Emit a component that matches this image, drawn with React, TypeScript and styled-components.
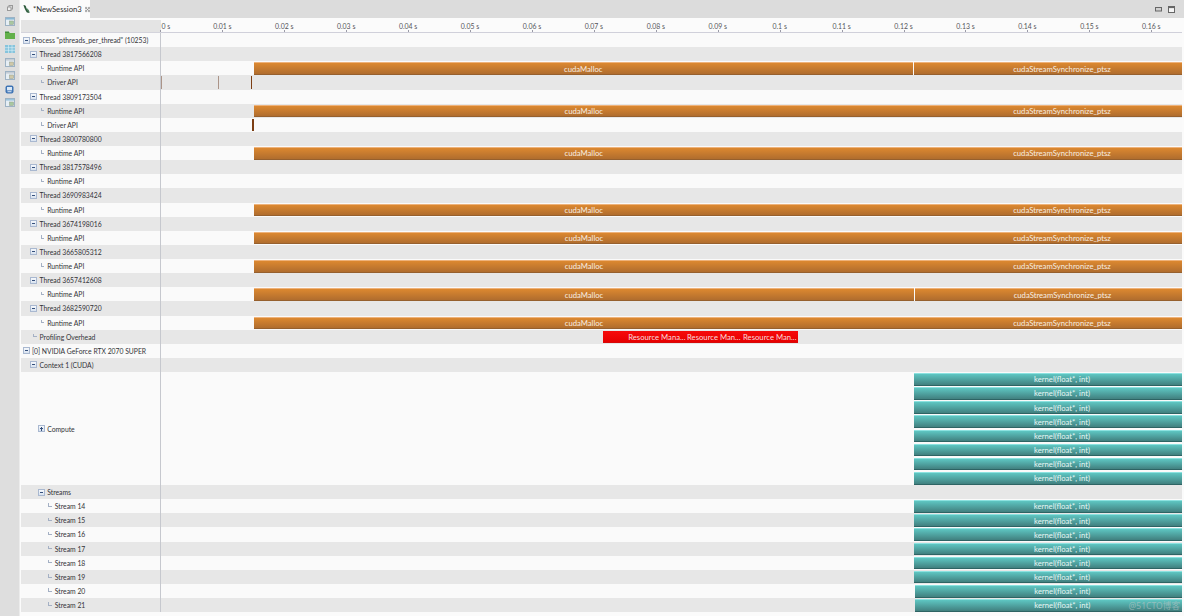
import React from 'react'
import styled, { createGlobalStyle } from 'styled-components'

const ROW_H = 14.125
const TRACK_X = 161
const TICK_0 = 160.4
const PX_PER_TICK = 61.93

const GlobalStyle = createGlobalStyle`
  html, body { margin: 0; padding: 0; background: #fbfbfb; overflow: hidden; }
  body { font-family: Lato, 'Noto Sans', sans-serif; font-size: 6.8px; color: #3c3c3c; }
`

const Page = styled.div`
  display: flex;
  width: 1184px;
  height: 616px;
  position: relative;
  overflow: hidden;
`
const Sidebar = styled.aside`
  width: 20px;
  flex: none;
  background: #dedede;
  display: flex;
  flex-direction: column;
  align-items: center;
  padding-top: 1px;
  box-sizing: border-box;
  border-right: 1px solid #ececec;
`
const SideIcon = styled.div`
  height: 13.6px;
  display: flex;
  align-items: center;
  justify-content: center;
`
const Main = styled.main`
  flex: 1;
  min-width: 0;
  display: flex;
  flex-direction: column;
`
const TabBar = styled.div`
  height: 18px;
  flex: none;
  display: flex;
  justify-content: space-between;
  background: #dcdcdc;
`
const Tab = styled.div`
  width: 70px;
  background: #fbfbfb;
  display: flex;
  align-items: center;
  gap: 3px;
  padding-left: 3px;
  box-sizing: border-box;
  font-size: 7.7px;
  color: #2f2f2f;
  white-space: nowrap;
`
const WindowButtons = styled.div`
  display: flex;
  align-items: center;
  gap: 6px;
  padding-right: 9px;
`
const Editor = styled.div`
  flex: 1;
  display: flex;
  flex-direction: column;
  margin: 0 2px 0 1px;
`
const RulerRow = styled.div`
  height: 15px;
  flex: none;
  display: grid;
  grid-template-columns: 140px 1fr;
`
const RulerCorner = styled.div`
  margin-top: 2px;
  background: #e4e4e4;
  border-bottom: 1px solid #d4d4dc;
`
const Ruler = styled.div`
  position: relative;
  border-bottom: 1px solid #d0d0da;
`
const Tick = styled.div<{ $x: number }>`
  position: absolute;
  left: ${({ $x }) => $x}px;
  bottom: 0;
  height: 2px;
  width: 1px;
  background: #9a9aa6;
`
const TickLabel = styled.span<{ $x: number; $first?: boolean }>`
  position: absolute;
  left: ${({ $x }) => $x}px;
  top: 3px;
  transform: ${({ $first }) => ($first ? 'none' : 'translateX(-50%)')};
  font-size: 6.9px;
  line-height: 10px;
  color: #55555a;
  white-space: nowrap;
`
const Row = styled.div<{ $odd: boolean; $span?: number }>`
  height: ${({ $span }) => ($span ?? 1) * ROW_H}px;
  display: grid;
  grid-template-columns: 140px 1fr;
  background: ${({ $odd }) => ($odd ? '#e7e7e7' : '#fafafa')};
`
const Label = styled.div<{ $level: number }>`
  display: flex;
  align-items: center;
  padding-left: ${({ $level }) => 1.5 + $level * 7.6}px;
  border-right: 1px solid #c6c8ce;
  color: #333338;
  white-space: nowrap;
  overflow: hidden;
`
const Toggle = styled.span`
  width: 7px;
  height: 7px;
  flex: none;
  margin-right: 2.5px;
  box-sizing: border-box;
  border: 1px solid #a9b8d0;
  background: linear-gradient(#f5f8fc, #d9e3f0);
  position: relative;
  &::before {
    content: '';
    position: absolute;
    left: 1px;
    right: 1px;
    top: 2px;
    height: 1px;
    background: #35507c;
  }
`
const PlusToggle = styled(Toggle)`
  &::after {
    content: '';
    position: absolute;
    top: 0.5px;
    bottom: 0.5px;
    left: 2px;
    width: 1px;
    background: #35507c;
  }
`
const Elbow = styled.span`
  width: 3.5px;
  height: 3.5px;
  flex: none;
  margin: -2px 3px 0 3px;
  border-left: 1px solid #a4b0c4;
  border-bottom: 1px solid #a4b0c4;
  box-sizing: border-box;
`
const Track = styled.div`
  position: relative;
  overflow: hidden;
`
const ComputeLanes = styled.div`
  display: flex;
  flex-direction: column;
`
const Lane = styled.div`
  height: ${ROW_H}px;
  position: relative;
`
const barThemes = {
  orange: { top: '#dc8830', bottom: '#b06d2e', edge: '#eeb27a', base: '#96602e', text: '#f8eee2' },
  teal: { top: '#5ec6c2', bottom: '#41807f', edge: '#8ce2e0', base: '#2e6464', text: '#e6f6f4' },
  red: { top: '#f50a0a', bottom: '#e60000', edge: '#f50a0a', base: '#d80808', text: '#fbdcdc' },
}
type BarKind = keyof typeof barThemes

const Bar = styled.div<{ $kind: BarKind; $end?: boolean }>`
  position: absolute;
  top: 1px;
  bottom: 0.5px;
  overflow: hidden;
  display: flex;
  align-items: center;
  justify-content: ${({ $end }) => ($end ? 'flex-end' : 'center')};
  padding-right: ${({ $end }) => ($end ? 1.5 : 0)}px;
  box-sizing: border-box;
  white-space: nowrap;
  font-size: 7.7px;
  color: ${({ $kind }) => barThemes[$kind].text};
  border-top: 1px solid ${({ $kind }) => barThemes[$kind].edge};
  border-bottom: 1px solid ${({ $kind }) => barThemes[$kind].base};
  background: linear-gradient(${({ $kind }) => barThemes[$kind].top}, ${({ $kind }) => barThemes[$kind].bottom});
`
const Slice = styled.div<{ $dark?: boolean }>`
  position: absolute;
  top: 1px;
  bottom: 1px;
  width: ${({ $dark }) => ($dark ? 1.5 : 1)}px;
  background: ${({ $dark }) => ($dark ? '#7c3e14' : '#ab9488')};
`
const Watermark = styled.div`
  position: absolute;
  right: 4px;
  bottom: 4px;
  font-size: 8.6px;
  line-height: 11px;
  color: rgba(190, 200, 200, 0.6);
  font-family: 'Noto Sans', 'Noto Sans CJK SC', sans-serif;
`

const RestoreIcon = () => (
  <svg width="6" height="6" viewBox="0 0 6 6">
    <rect x="2" y="0.5" width="3.5" height="3.5" fill="#eee" stroke="#999" />
    <rect x="0.5" y="2" width="3.5" height="3.5" fill="#eee" stroke="#999" />
  </svg>
)
const ViewIcon = ({ accent = '#88b8d4', inner = '#a8c8a0' }: { accent?: string; inner?: string }) => (
  <svg width="10" height="9" viewBox="0 0 10 9">
    <rect x="0.5" y="0.5" width="9" height="8" fill="#e6eef4" stroke="#9db2c4" />
    <rect x="1" y="1" width="8" height="1.6" fill={accent} />
    <rect x="4.5" y="4" width="4" height="3.5" fill={inner} stroke="#8f9a8a" strokeWidth="0.5" />
  </svg>
)
const FolderIcon = () => (
  <svg width="10" height="8" viewBox="0 0 10 8">
    <path d="M0 1h4l1 1h5v6H0z" fill="#62b04a" />
    <rect x="0" y="0.5" width="4" height="1.5" fill="#3f8f38" />
  </svg>
)
const TableIcon = () => (
  <svg width="10" height="8" viewBox="0 0 10 8">
    <rect width="10" height="8" fill="#86c4dc" />
    <path d="M0 2.7h10M0 5.3h10M3.5 0v8M7 0v8" stroke="#dff1f8" strokeWidth="0.6" />
  </svg>
)
const ScreenIcon = () => (
  <svg width="9" height="9" viewBox="0 0 9 9">
    <rect x="0.5" y="0.5" width="8" height="8" rx="2" fill="#3f74b4" />
    <rect x="2" y="2" width="5" height="3.4" fill="#d9e7f5" />
    <rect x="2.5" y="6.2" width="4" height="1" fill="#d9e7f5" />
  </svg>
)
const BugIcon = () => (
  <svg width="8" height="10" viewBox="0 0 8 10">
    <path d="M0.5 0.5 C3 0.5 3.5 2 4 4 C5.5 4.5 7.5 6 7.5 9.5 L4.5 9 C3 7 1.5 4 0.5 0.5z" fill="#2e5a3c" />
    <path d="M4 4 L6.5 8" stroke="#76b08a" strokeWidth="0.8" />
  </svg>
)
const CloseIcon = () => (
  <svg width="6" height="7" viewBox="0 0 6 7">
    <path d="M0.5 1h1.5v1.5H0.5zM4 1h1.5v1.5H4zM0.5 4.5h1.5V6H0.5zM4 4.5h1.5V6H4z" fill="none" stroke="#777" strokeWidth="0.7" />
    <path d="M2 2.5L4 4.5M4 2.5L2 4.5" stroke="#777" strokeWidth="0.7" />
  </svg>
)
const MinimizeIcon = () => (
  <svg width="7" height="5" viewBox="0 0 7 5">
    <rect x="0.5" y="0.5" width="6" height="3.5" fill="#cfcfcf" stroke="#666" />
  </svg>
)
const MaximizeIcon = () => (
  <svg width="7" height="7" viewBox="0 0 7 7">
    <rect x="0.5" y="0.5" width="6" height="6" fill="#f4f4f4" stroke="#666" />
    <rect x="0.5" y="0.5" width="6" height="1.6" fill="#666" />
  </svg>
)

type BarData = { from: number; to: number; kind: BarKind; text?: string; end?: boolean }
type RowData = {
  label: string
  level: number
  type: 'toggle' | 'leaf' | 'plus'
  bars?: BarData[]
  slices?: { x: number; dark?: boolean }[]
  lanes?: BarData[][]
}

// the last calls run past the right edge of the view, so their text is centred off to the right
const VIEW_END = 1210

const runtime = (start: number, split = 914, gap = 0): BarData[] => [
  { from: start, to: split, kind: 'orange', text: 'cudaMalloc' },
  { from: split + gap, to: VIEW_END, kind: 'orange', text: 'cudaStreamSynchronize_ptsz' },
]

const kernel = (start = 914): BarData[] => [{ from: start, to: VIEW_END, kind: 'teal', text: 'kernel(float*, int)' }]

const thread = (id: string, start: number, split?: number, gap?: number): RowData[] => [
  { label: `Thread ${id}`, level: 1, type: 'toggle' },
  { label: 'Runtime API', level: 2, type: 'leaf', bars: runtime(start, split, gap) },
]

const streamStart = (n: number) => (n === 14 ? 913.5 : n >= 20 ? 914.5 : 914)

const rows: RowData[] = [
  { label: 'Process "pthreads_per_thread" (10253)', level: 0, type: 'toggle' },
  ...thread('3817566208', 253.5, 913, 1),
  { label: 'Driver API', level: 2, type: 'leaf', slices: [{ x: 161 }, { x: 217.5 }, { x: 250.5, dark: true }] },
  ...thread('3809173504', 253.5),
  { label: 'Driver API', level: 2, type: 'leaf', slices: [{ x: 252, dark: true }] },
  ...thread('3800780800', 253.5),
  { label: 'Thread 3817578496', level: 1, type: 'toggle' },
  { label: 'Runtime API', level: 2, type: 'leaf' },
  ...thread('3690983424', 253.5),
  ...thread('3674198016', 254),
  ...thread('3665805312', 254),
  ...thread('3657412608', 254, 914, 1),
  ...thread('3682590720', 254),
  {
    label: 'Profiling Overhead',
    level: 1,
    type: 'leaf',
    bars: [
      { from: 603, to: 687, kind: 'red', text: 'Resource Mana...', end: true },
      { from: 687, to: 742, kind: 'red', text: 'Resource Man...', end: true },
      { from: 742, to: 798, kind: 'red', text: 'Resource Man...', end: true },
    ],
  },
  { label: '[0] NVIDIA GeForce RTX 2070 SUPER', level: 0, type: 'toggle' },
  { label: 'Context 1 (CUDA)', level: 1, type: 'toggle' },
  {
    label: 'Compute',
    level: 2,
    type: 'plus',
    lanes: Array.from({ length: 8 }, () => kernel()),
  },
  { label: 'Streams', level: 2, type: 'toggle' },
  ...[14, 15, 16, 17, 18, 19, 20, 21].map<RowData>((n) => ({
    label: `Stream ${n}`,
    level: 3,
    type: 'leaf',
    bars: kernel(streamStart(n)),
  })),
]

const ticks = Array.from({ length: 17 }, (_, i) => i)

const Bars = ({ bars }: { bars: BarData[] }) => (
  <>
    {bars.map((b) => (
      <Bar key={b.from} $kind={b.kind} $end={b.end} style={{ left: b.from - TRACK_X, width: b.to - b.from }}>
        {b.text}
      </Bar>
    ))}
  </>
)

export default function App() {
  return (
    <Page>
      <GlobalStyle />
      <Sidebar>
        <SideIcon><RestoreIcon /></SideIcon>
        <SideIcon><ViewIcon /></SideIcon>
        <SideIcon><FolderIcon /></SideIcon>
        <SideIcon><TableIcon /></SideIcon>
        <SideIcon><ViewIcon accent="#c4ccd4" inner="#cfc8a8" /></SideIcon>
        <SideIcon><ViewIcon accent="#c4ccd4" inner="#cfc8a8" /></SideIcon>
        <SideIcon><ScreenIcon /></SideIcon>
        <SideIcon><ViewIcon accent="#9cc4dc" /></SideIcon>
      </Sidebar>
      <Main>
        <TabBar>
          <Tab>
            <BugIcon />
            *NewSession3
            <CloseIcon />
          </Tab>
          <WindowButtons>
            <MinimizeIcon />
            <MaximizeIcon />
          </WindowButtons>
        </TabBar>
        <Editor>
          <RulerRow>
            <RulerCorner />
            <Ruler>
              {ticks.map((i) => {
                const x = TICK_0 - TRACK_X + i * PX_PER_TICK
                return (
                  <React.Fragment key={i}>
                    <Tick $x={x} />
                    <TickLabel $x={i === 0 ? x + 1 : x} $first={i === 0}>
                      {i === 0 ? '0 s' : `${(i / 100).toFixed(2).replace(/0$/, '')} s`}
                    </TickLabel>
                  </React.Fragment>
                )
              })}
            </Ruler>
          </RulerRow>
          {rows.map((r, i) => (
            <Row key={i} $odd={i % 2 === 1} $span={r.lanes ? r.lanes.length : 1}>
              <Label $level={r.level}>
                {r.type === 'toggle' && <Toggle />}
                {r.type === 'plus' && <PlusToggle />}
                {r.type === 'leaf' && <Elbow />}
                {r.label}
              </Label>
              <Track>
                {r.bars && <Bars bars={r.bars} />}
                {r.slices?.map((s) => (
                  <Slice key={s.x} $dark={s.dark} style={{ left: s.x - TRACK_X }} />
                ))}
                {r.lanes && (
                  <ComputeLanes>
                    {r.lanes.map((bars, n) => (
                      <Lane key={n}>
                        <Bars bars={bars} />
                      </Lane>
                    ))}
                  </ComputeLanes>
                )}
              </Track>
            </Row>
          ))}
        </Editor>
      </Main>
      <Watermark>@51CTO博客</Watermark>
    </Page>
  )
}
